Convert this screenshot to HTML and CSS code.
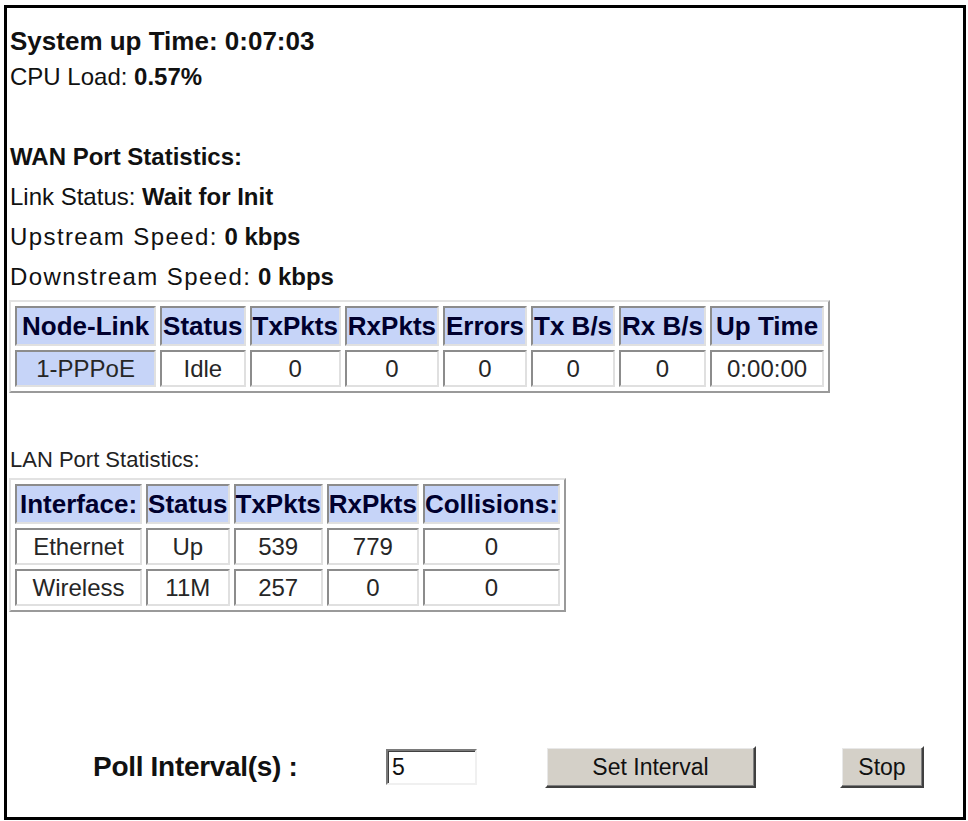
FILE: index.html
```html
<!DOCTYPE html>
<html>
<head>
    <title>Statistics</title>
    <link rel="stylesheet" href="styles.css">
</head>
<body>
    <div class="frame">
        <p class="title">System up Time: 0:07:03</p>
        <p class="cpu">CPU Load: <b>0.57%</b></p>

        <p class="heading">WAN Port Statistics:</p>
        <p class="line">Link Status: <b>Wait for Init</b></p>
        <p class="line"><span class="wide">Upstream Speed:</span> <b>0 kbps</b></p>
        <p class="line"><span class="wide">Downstream Speed:</span> <b>0 kbps</b></p>

        <table class="stats wan">
            <tr>
                <th>Node-Link</th><th>Status</th><th>TxPkts</th><th>RxPkts</th>
                <th>Errors</th><th>Tx B/s</th><th>Rx B/s</th><th>Up Time</th>
            </tr>
            <tr>
                <td class="node">1-PPPoE</td><td>Idle</td><td>0</td><td>0</td>
                <td>0</td><td>0</td><td>0</td><td>0:00:00</td>
            </tr>
        </table>

        <p class="lan-title">LAN Port Statistics:</p>
        <table class="stats lan">
            <tr>
                <th>Interface:</th><th>Status</th><th>TxPkts</th><th>RxPkts</th><th>Collisions:</th>
            </tr>
            <tr>
                <td>Ethernet</td><td>Up</td><td>539</td><td>779</td><td>0</td>
            </tr>
            <tr>
                <td>Wireless</td><td>11M</td><td>257</td><td>0</td><td>0</td>
            </tr>
        </table>

        <div class="poll">
            <label class="poll-label" for="interval">Poll Interval(s) :</label>
            <input class="poll-input" id="interval" type="text" value="5">
            <button class="btn btn-set">Set Interval</button>
            <button class="btn btn-stop">Stop</button>
        </div>
    </div>
</body>
</html>
```

FILE: styles.css
```css
body { margin: 0; background: #fff; color: #111; font-family: "Liberation Sans", Arial, sans-serif; }
p { margin: 0; }

.frame {
    margin: 5px 0 0 4px;
    width: 962px;
    height: 815px;
    box-sizing: border-box;
    border: 3px solid #000;
    padding-left: 2px;
    display: flex;
    flex-direction: column;
    align-items: flex-start;
}

.title { font-size: 26px; font-weight: bold; line-height: 36px; margin-top: 15px; margin-left: 1px; }
.cpu { font-size: 24px; line-height: 36px; margin-left: 1px; }
.heading { font-size: 24px; font-weight: bold; line-height: 40px; margin-top: 42px; margin-left: 1px; }
.line { font-size: 24px; line-height: 40px; margin-left: 1px; }
.wide { letter-spacing: 1.4px; }

.stats {
    border-collapse: separate;
    border-spacing: 4px;
    border: 2px solid;
    border-color: #e2e2e2 #9a9a9a #9a9a9a #e2e2e2;
    margin-top: 3px;
}
.stats th, .stats td {
    border: 2px solid;
    border-color: #8c8c8c #e0e0e0 #e0e0e0 #8c8c8c;
    padding: 0 1px;
    text-align: center;
    white-space: nowrap;
}
.stats th {
    height: 36px;
    background: #c6d4f8;
    color: #00002e;
    font-size: 26px;
    font-weight: bold;
}
.stats td {
    height: 33px;
    background: #fff;
    color: #262626;
    font-size: 24px;
}
.stats td.node { background: #c6d4f8; padding: 0 12px; }
.wan th:first-child { padding: 0 5px; }
.wan th:last-child { padding: 0 4px; }
.lan th { padding: 0; }
.lan th:first-child { padding: 0 3px; }

.lan-title { font-size: 22px; line-height: 30px; margin-top: 52px; margin-left: 1px; color: #222; }

.poll {
    margin-top: auto;
    margin-bottom: 27px;
    padding-left: 84px;
    display: flex;
    align-items: center;
    height: 46px;
}
.poll-label { font-size: 28px; font-weight: bold; letter-spacing: -0.3px; width: 207px; white-space: nowrap; }
.poll-input {
    margin-left: 86px;
    width: 91px;
    height: 36px;
    box-sizing: border-box;
    border: 2px solid;
    border-color: #7a7a7a #f0f0f0 #f0f0f0 #7a7a7a;
    box-shadow: inset 1px 1px #404040;
    padding: 0 4px;
    font-family: "Liberation Sans", Arial, sans-serif;
    font-size: 23px;
    color: #111;
}
.btn {
    height: 42px;
    box-sizing: border-box;
    background: #d4d0c8;
    border: 2px solid;
    border-color: #fff #404040 #404040 #fff;
    box-shadow: inset -1px -1px #808080, inset 1px 1px #e8e8e8;
    font-family: "Liberation Sans", Arial, sans-serif;
    font-size: 23px;
    color: #111;
    padding: 0;
}
.btn-set { margin-left: 68px; width: 211px; }
.btn-stop { margin-left: 84px; width: 84px; }
```
